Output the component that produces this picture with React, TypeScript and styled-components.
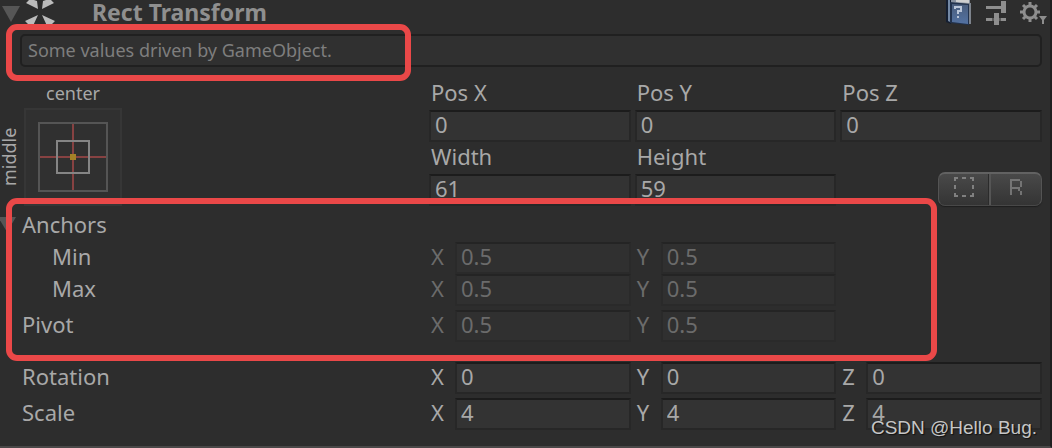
import React from "react";
import styled, { createGlobalStyle, css } from "styled-components";

const Global = createGlobalStyle`
  * { box-sizing: border-box; }
  body {
    margin: 0;
    background: #2d2d2d;
    color: #a8a8a8;
    font: 22px/28px "Noto Sans", "Open Sans", sans-serif;
  }
`;

const columns = css`
  display: grid;
  grid-template-columns: 425px repeat(3, minmax(0, 1fr));
  column-gap: 4px;
  padding-right: 8px;
`;

const Panel = styled.main`
  position: relative;
  padding-bottom: 16px;
  border-right: 2px solid #1f1f1f;
  border-bottom: 2px solid #4a4848;
`;

const Header = styled.header`
  display: flex;
  align-items: flex-start;
  height: 34px;
`;

const Title = styled.h1`
  flex: 1;
  margin: 0 0 0 34px;
  font-size: 23px;
  line-height: 24px;
  font-weight: 700;
  color: #8f8f8f;
`;

const IconButton = styled.button`
  padding: 0;
  border: 0;
  background: none;
  line-height: 0;
  svg { display: block; }
`;

const Tools = styled.div`
  display: flex;
  gap: 13px;
  padding-right: 2px;
`;

const HelpArea = styled.div`
  position: relative;
  padding: 0 8px 0 20px;
`;

const HelpBox = styled.p`
  margin: 0;
  height: 33px;
  padding: 0 6px;
  border: 2px solid #202020;
  border-radius: 5px;
  background: #303030;
  color: #7e7e7e;
  font-size: 18px;
  line-height: 28px;
`;

const Highlight = styled.div`
  position: absolute;
  border: 6px solid #ea4848;
  border-radius: 11px;
  pointer-events: none;
`;

const HelpHighlight = styled(Highlight)`
  left: 6px;
  top: -10px;
  width: 405px;
  height: 57px;
`;

const AnchorHighlight = styled(Highlight)`
  left: 6px;
  right: 113px;
  top: -8px;
  bottom: -19px;
`;

const Position = styled.section`
  ${columns}
  grid-template-rows: 64px 64px;
  margin-top: 11px;
`;

const Preset = styled.div`
  grid-row: span 2;
  display: grid;
  grid-template-columns: 24px 98px;
  grid-template-rows: 30px 98px;
`;

const PresetTop = styled.span`
  grid-column: 2;
  font-size: 18px;
  line-height: 30px;
  text-align: center;
`;

const PresetSide = styled.span`
  justify-self: start;
  writing-mode: vertical-rl;
  transform: rotate(180deg);
  font-size: 18px;
  line-height: 18px;
  text-align: center;
`;

const Stacked = styled.label`
  display: block;
`;

const Caption = styled.span`
  display: block;
  padding: 0 0 4px 2px;
`;

const Input = styled.input`
  display: block;
  width: 100%;
  min-width: 0;
  height: 32px;
  margin: 0;
  padding: 0 4px 4px;
  border: 2px solid #272727;
  border-top-color: #1c1c1c;
  border-radius: 0;
  outline: 0;
  background: #333;
  color: #a8a8a8;
  font: inherit;
  line-height: 24px;
  &:disabled {
    border-color: #2a2a2a;
    border-top-color: #242424;
    background: #303030;
    color: #6b6b6b;
  }
`;

const Modes = styled.div`
  grid-column: 4;
  display: flex;
  align-self: end;
  justify-self: end;
  width: 104px;
  height: 34px;
  border: 1px solid #545454;
  border-top: 2px solid #626262;
  border-bottom-color: #484848;
  border-radius: 7px;
  overflow: hidden;
  background: linear-gradient(#494949, #343434);
  box-shadow: 0 1px 1px #1e1e1e;
`;

const ModeButton = styled.button`
  flex: 1;
  display: flex;
  justify-content: center;
  align-items: flex-start;
  padding: 3px 0 0;
  border: 0;
  background: none;
  & + & { border-left: 2px solid #555; box-shadow: -1px 0 #2b2b2b; }
`;

const Anchors = styled.section`
  position: relative;
`;

const Foldout = styled.div`
  display: flex;
  align-items: center;
  height: 36px;
`;

const FoldoutButton = styled(IconButton)`
  width: 22px;
`;

const Row = styled.div<{ $space?: number }>`
  ${columns}
  margin-top: ${(p) => p.$space ?? 0}px;
`;

const RowLabel = styled.span<{ $nested?: boolean }>`
  padding-left: ${(p) => (p.$nested ? 52 : 22)}px;
`;

const Inline = styled.label<{ $dim?: boolean }>`
  display: grid;
  grid-template-columns: 24px minmax(0, 1fr);
  gap: 2px;
  color: ${(p) => (p.$dim ? "#6b6b6b" : "#a8a8a8")};
  span { padding-left: 2px; }
`;

const Watermark = styled.div`
  position: absolute;
  right: 13px;
  bottom: 6px;
  font: 19px/24px "Liberation Sans", Arial, sans-serif;
  color: #c6c6c6;
  text-shadow: 1px 1px 1px #111;
`;

const Triangle = () => (
  <svg width="22" height="26" viewBox="0 0 22 26">
    <path d="M2 6H20L11 22Z" fill="#565656" />
  </svg>
);

const ArrowsIcon = () => (
  <svg width="36" height="28" viewBox="0 0 36 28">
    <path
      d="M4 3L7 0H12L15 1L16 9ZM32 3L29 0H24L21 1L20 9ZM3 21L16 15L10 28ZM33 21L20 15L26 28Z"
      fill="#bcbcbc"
    />
  </svg>
);

const BookIcon = () => (
  <svg width="28" height="27" viewBox="0 0 28 27">
    <defs>
      <linearGradient id="cover" x1="0" y1="0" x2="0" y2="1">
        <stop offset="0" stopColor="#4a5d7c" />
        <stop offset="1" stopColor="#5372a2" />
      </linearGradient>
    </defs>
    <path d="M1 0H6V24L1 22Z" fill="#141e30" />
    <path d="M3 0H5V22L3 21Z" fill="#7388a4" />
    <path d="M6 0H25V4L6 3Z" fill="#8a93a1" />
    <path d="M11 0H24V3L11 2Z" fill="#cfcfcf" />
    <path d="M23 3H26V24H23Z" fill="#7d838c" />
    <path d="M5 2L24 4V25L5 23Z" fill="#22324d" />
    <path d="M7 4L23 5V24L7 22Z" fill="url(#cover)" />
    <path d="M10 9V7H16V11H13V14" fill="none" stroke="#b9c5d8" strokeWidth="2" />
    <path d="M12 16H14V18H12Z" fill="#b9c5d8" />
  </svg>
);

const SlidersIcon = () => (
  <svg width="21" height="25" viewBox="0 0 21 25">
    <path d="M0 5H15V0H20V12H15V8H0ZM0 17H6V20H0ZM8 12H13V24H8ZM15 17H20V20H15Z" fill="#8e8e8e" />
    <path d="M6 17H8V20H6ZM13 17H15V20H13Z" fill="#5a5a5a" />
  </svg>
);

const GearIcon = () => (
  <svg width="28" height="24" viewBox="0 0 28 24">
    <g stroke="#8e8e8e" fill="none">
      <circle cx="10" cy="10" r="6" strokeWidth="3" />
      <path
        d="M10 0V4M10 16V20M0 10H4M16 10H20M3 3L6 6M14 14L17 17M17 3L14 6M6 14L3 17"
        strokeWidth="3"
      />
    </g>
    <path d="M19 14H27L24 18V22H22V18Z" fill="#8e8e8e" />
  </svg>
);

const AnchorPreview = () => (
  <svg width="98" height="98" viewBox="0 0 98 98" role="img" aria-label="Anchor preset">
    <rect x="1" y="1" width="96" height="96" fill="#303030" stroke="#363636" strokeWidth="2" />
    <rect x="15" y="15" width="68" height="68" fill="none" stroke="#555" strokeWidth="2" />
    <path d="M49 16V82M16 49H82" stroke="#874242" strokeWidth="2" />
    <rect x="33" y="33" width="32" height="32" fill="none" stroke="#858585" strokeWidth="2" />
    <rect x="46" y="46" width="6" height="6" fill="#a38127" />
  </svg>
);

const BlueprintIcon = () => (
  <svg width="20" height="20" viewBox="0 0 20 20">
    <path
      d="M1 4V1H4M8 1H12M16 1H19V4M19 8V12M19 16V19H16M12 19H8M4 19H1V16M1 12V8"
      fill="none"
      stroke="#808080"
      strokeWidth="2"
    />
  </svg>
);

const RawIcon = () => (
  <svg width="12" height="20" viewBox="0 0 12 20">
    <path
      d="M0 2H10V4H2V10H10V12H2V18H0ZM10 4H12V10H10ZM8 12H10V14H8ZM10 14H12V18H10Z"
      fill="#747474"
    />
  </svg>
);

const StackedField = ({ name, value }: { name: string; value: string }) => (
  <Stacked>
    <Caption>{name}</Caption>
    <Input defaultValue={value} />
  </Stacked>
);

type VectorProps = {
  name: string;
  values: string[];
  nested?: boolean;
  disabled?: boolean;
  space?: number;
};

const VectorRow = ({ name, values, nested, disabled, space }: VectorProps) => (
  <Row $space={space} role="group" aria-label={name}>
    <RowLabel $nested={nested}>{name}</RowLabel>
    {values.map((value, i) => (
      <Inline key={i} $dim={disabled}>
        <span>{"XYZ"[i]}</span>
        <Input defaultValue={value} disabled={disabled} />
      </Inline>
    ))}
  </Row>
);

export default function App() {
  return (
    <>
      <Global />
      <Panel>
        <Header>
          <IconButton aria-label="Collapse component"><Triangle /></IconButton>
          <ArrowsIcon />
          <Title>Rect Transform</Title>
          <Tools>
            <IconButton aria-label="Help"><BookIcon /></IconButton>
            <IconButton aria-label="Presets"><SlidersIcon /></IconButton>
            <IconButton aria-label="Settings"><GearIcon /></IconButton>
          </Tools>
        </Header>
        <HelpArea>
          <HelpBox>Some values driven by GameObject.</HelpBox>
          <HelpHighlight />
        </HelpArea>
        <Position>
          <Preset>
            <PresetTop>center</PresetTop>
            <PresetSide>middle</PresetSide>
            <AnchorPreview />
          </Preset>
          <StackedField name="Pos X" value="0" />
          <StackedField name="Pos Y" value="0" />
          <StackedField name="Pos Z" value="0" />
          <StackedField name="Width" value="61" />
          <StackedField name="Height" value="59" />
          <Modes>
            <ModeButton aria-label="Blueprint mode"><BlueprintIcon /></ModeButton>
            <ModeButton aria-label="Raw edit mode"><RawIcon /></ModeButton>
          </Modes>
        </Position>
        <Anchors>
          <Foldout>
            <FoldoutButton aria-label="Collapse anchors">
              <svg width="22" height="16" viewBox="0 0 22 16">
                <path d="M-2 1H16L7 16Z" fill="#565656" />
              </svg>
            </FoldoutButton>
            <span>Anchors</span>
          </Foldout>
          <VectorRow name="Min" values={["0.5", "0.5"]} nested disabled />
          <VectorRow name="Max" values={["0.5", "0.5"]} nested disabled />
          <VectorRow name="Pivot" values={["0.5", "0.5"]} disabled space={4} />
          <AnchorHighlight />
        </Anchors>
        <VectorRow name="Rotation" values={["0", "0", "0"]} space={20} />
        <VectorRow name="Scale" values={["4", "4", "4"]} space={4} />
        <Watermark>CSDN @Hello Bug.</Watermark>
      </Panel>
    </>
  );
}
